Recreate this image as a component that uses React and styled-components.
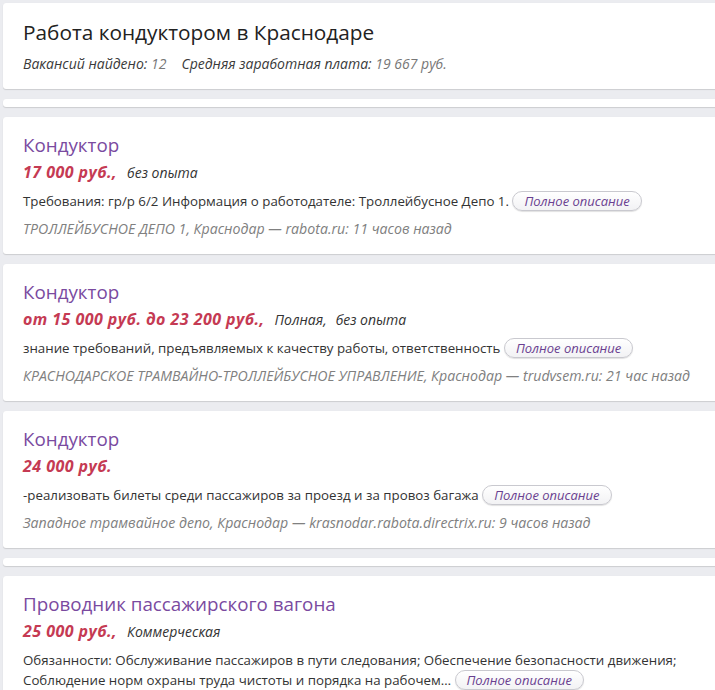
import React from 'react';
import styled, { createGlobalStyle } from 'styled-components';

const GlobalStyle = createGlobalStyle`
  html, body {
    margin: 0;
    padding: 0;
    background: #ebecf0;
    overflow: hidden;
  }
  body {
    font-family: "Open Sans", "DejaVu Sans", sans-serif;
    color: #333;
  }
`;

const Page = styled.div`
  display: flex;
  flex-direction: column;
  gap: 10px;
  padding: 3px 0 0 3px;
  width: 740px;
`;

const Card = styled.div`
  background: #fff;
  border-radius: 3px;
  box-shadow: 0 1px 1px rgba(0, 0, 0, 0.13), 0 0 1px rgba(0, 0, 0, 0.06);
  padding: ${p => (p.$thin ? '0' : '14px 20px 11px 20px')};
  height: ${p => (p.$thin ? '8px' : 'auto')};
`;

const HeadCard = styled(Card)`
  padding: 14px 20px 15px 20px;
`;

const Heading = styled.h1`
  margin: 0;
  font-size: 20.8px;
  font-weight: 400;
  color: #222;
  line-height: 30px;
`;

const Stats = styled.div`
  margin-top: 7px;
  font-size: 14px;
  font-style: italic;
  color: #3a3a3a;
  line-height: 20px;
`;

const StatValue = styled.span`
  color: #777;
  margin-right: ${p => (p.$gap ? '15px' : '0')};
`;

const Title = styled.a`
  display: block;
  font-size: 18.8px;
  line-height: 28px;
  height: 28px;
  color: #7a4a9f;
  text-decoration: none;
`;

const SalaryRow = styled.div`
  height: 28px;
  font-size: 14px;
  line-height: 28px;
  font-style: italic;
  color: #333;
`;

const Salary = styled.b`
  font-size: 16px;
  line-height: 1;
  font-weight: 700;
  letter-spacing: 0.45px;
  color: #c53a53;
  margin-right: 10px;
`;

const Cond = styled.span`
  margin-right: 9px;
`;

const Desc = styled.div`
  font-size: 13.3px;
  line-height: 20px;
  padding: 4px 0;
  color: #333;
`;

const MoreButton = styled.a`
  display: inline-block;
  padding: 0 11px;
  height: 20px;
  line-height: 18px;
  box-sizing: border-box;
  border: 1px solid #c9c9cf;
  border-radius: 10px;
  background: linear-gradient(#fff, #f2f2f4);
  box-shadow: 0 1px 1px rgba(0, 0, 0, 0.12);
  font-size: 13px;
  font-style: italic;
  color: #6a3f90;
  text-decoration: none;
  vertical-align: top;
`;

const Meta = styled.div`
  height: 28px;
  font-size: 14.15px;
  line-height: 28px;
  font-style: italic;
  color: #808080;
  white-space: nowrap;
`;

const jobs = [
  {
    title: 'Кондуктор',
    salary: '17 000 руб.,',
    conds: ['без опыта'],
    desc: 'Требования: гр/р 6/2 Информация о работодателе: Троллейбусное Депо 1.',
    meta: 'ТРОЛЛЕЙБУСНОЕ ДЕПО 1, Краснодар — rabota.ru: 11 часов назад',
  },
  {
    title: 'Кондуктор',
    salary: 'от 15 000 руб. до 23 200 руб.,',
    conds: ['Полная,', 'без опыта'],
    desc: 'знание требований, предъявляемых к качеству работы, ответственность',
    meta: 'КРАСНОДАРСКОЕ ТРАМВАЙНО-ТРОЛЛЕЙБУСНОЕ УПРАВЛЕНИЕ, Краснодар — trudvsem.ru: 21 час назад',
  },
  {
    title: 'Кондуктор',
    salary: '24 000 руб.',
    conds: [],
    desc: '-реализовать билеты среди пассажиров за проезд и за провоз багажа',
    meta: 'Западное трамвайное депо, Краснодар — krasnodar.rabota.directrix.ru: 9 часов назад',
  },
  {
    title: 'Проводник пассажирского вагона',
    salary: '25 000 руб.,',
    conds: ['Коммерческая'],
    desc:
      'Обязанности: Обслуживание пассажиров в пути следования; Обеспечение безопасности движения; Соблюдение норм охраны труда чистоты и порядка на рабочем…',
    meta: '',
  },
];

const JobCard = ({ job }) => (
  <Card>
    <Title href="#">{job.title}</Title>
    <SalaryRow>
      <Salary>{job.salary}</Salary>
      {job.conds.map((c, i) => (
        <Cond key={i}>{c}</Cond>
      ))}
    </SalaryRow>
    <Desc>
      {job.desc} <MoreButton href="#">Полное описание</MoreButton>
    </Desc>
    {job.meta && <Meta>{job.meta}</Meta>}
  </Card>
);

export default function App() {
  return (
    <>
      <GlobalStyle />
      <Page>
        <HeadCard>
          <Heading>Работа кондуктором в Краснодаре</Heading>
          <Stats>
            Вакансий найдено: <StatValue $gap>12</StatValue>
            Средняя заработная плата: <StatValue>19 667 руб.</StatValue>
          </Stats>
        </HeadCard>
        <Card $thin />
        <JobCard job={jobs[0]} />
        <JobCard job={jobs[1]} />
        <JobCard job={jobs[2]} />
        <Card $thin />
        <JobCard job={jobs[3]} />
      </Page>
    </>
  );
}
